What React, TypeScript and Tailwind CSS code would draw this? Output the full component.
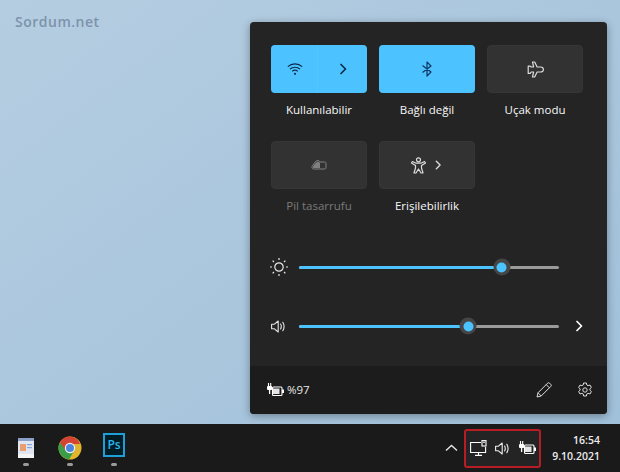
import React from "react";

const font = { fontFamily: '"Segoe UI", "Open Sans", "Noto Sans", sans-serif' };

function Chevron({ c = "#fff", s = 12, w = 1.7 }: { c?: string; s?: number; w?: number }) {
  return (
    <svg width={s} height={s} viewBox="0 0 12 12" fill="none" stroke={c} strokeWidth={w}>
      <path d="M4 1.5 8.5 6 4 10.5" strokeLinecap="round" strokeLinejoin="round" />
    </svg>
  );
}
function Wifi() {
  return (
    <svg width="16" height="14" viewBox="0 0 16 14" fill="none" stroke="#0d2c4d" strokeWidth="1.1">
      <path d="M.8 4.6C4.8 1 11.2 1 15.2 4.6" />
      <path d="M3 7C5.8 4.6 10.2 4.6 13 7" />
      <path d="M5.2 9.4C6.8 8 9.2 8 10.8 9.4" />
      <circle cx="8" cy="11.8" r="1.1" fill="#0d2c4d" stroke="none" />
    </svg>
  );
}
function Bluetooth() {
  return (
    <svg width="12" height="16" viewBox="0 0 12 16" fill="none" stroke="#0f3a66" strokeWidth="1.2">
      <path d="M1.5 4.5 10 11 6 15V1l4 4-8.5 6.5" strokeLinejoin="round" />
    </svg>
  );
}
function Plane() {
  return (
    <svg width="17" height="17" viewBox="0 0 17 17" fill="none" stroke="#dcdcdc" strokeWidth="1.2">
      <path d="M5.5 1h2.2l2.4 5h3.4c1.6 0 2.9 1.1 2.9 2.5S15.100 11 13.500 11h-3.400l-2.400 5H5.500l1.100-5H4.200L3.200 12.400H1.200V5.200h2L4.200 6h2.400z" strokeLinejoin="round" />
    </svg>
  );
}
function Saver() {
  return (
    <svg width="16" height="12" viewBox="0 0 16 12" fill="none">
      <path d="M1 7.500 4.500 2.500 7 1.200 9 3h4.500a1.500 1.500 0 0 1 1.500 1.500v4a1.500 1.500 0 0 1-1.500 1.500H2.500A1.500 1.500 0 0 1 1 8.500z" stroke="#808080" strokeWidth="1" />
      <path d="M2 9V7.500L5 3.500 7 2.500 9 4v5z" fill="#808080" />
    </svg>
  );
}
function Person() {
  return (
    <svg width="15" height="17" viewBox="0 0 15 17" fill="none" stroke="#dcdcdc" strokeWidth="1.2">
      <circle cx="7.500" cy="2.800" r="2" />
      <path d="M1.500 4.500 5 6.200h5l3.500-1.700 1 1.400L10.500 8.500v2.500l1.500 5h-2L7.500 12 5 16H3l1.500-5V8.500L.500 5.900z" strokeLinejoin="round" />
    </svg>
  );
}
function Sun() {
  return (
    <svg width="20" height="20" viewBox="0 0 20 20" fill="none" stroke="#e6e6e6" strokeWidth="1.2">
      <circle cx="10" cy="10" r="4.200" />
      <path d="M10 1v2M10 17v2M1 10h2M17 10h2M3.600 3.600 5 5M15 15l1.400 1.400M3.600 16.400 5 15M15 5l1.400-1.400" />
    </svg>
  );
}
function Speaker({ c = "#e6e6e6" }: { c?: string }) {
  return (
    <svg width="15" height="13" viewBox="0 0 15 13" fill="none" stroke={c} strokeWidth="1.1">
      <path d="M.6 4.200h2.800L7.200 1v11L3.400 8.800H.6z" strokeLinejoin="round" />
      <path d="M9.600 4c.8 1.500.8 3.500 0 5M11.800 2.300c1.600 2.600 1.600 5.800 0 8.400" strokeLinecap="round" />
    </svg>
  );
}
function Battery() {
  return (
    <svg width="17" height="14" viewBox="0 0 17 14" fill="none">
      <path d="M1.500 0v3M3.700 0v3" stroke="#fff" strokeWidth="1.100" />
      <path d="M2.600 7v4" stroke="#fff" strokeWidth="1.300" />
      <rect x="0" y="3" width="5.200" height="4" rx="1" fill="#fff" />
      <rect x="5.500" y="4" width="9.500" height="8.500" rx="1" stroke="#fff" strokeWidth="1.100" />
      <rect x="6" y="5.500" width="6.500" height="5.500" fill="#e4e4e4" />
      <rect x="15" y="6.500" width="2" height="3.500" fill="#fff" />
    </svg>
  );
}
function Pencil() {
  return (
    <svg width="16" height="16" viewBox="0 0 16 16" fill="none" stroke="#dcdcdc" strokeWidth="1">
      <path d="M1 15 2 10.800 11.600 1.200a1.400 1.400 0 0 1 2 0l1.200 1.200a1.400 1.400 0 0 1 0 2L5.200 14z" strokeLinejoin="round" />
      <path d="M10.200 2.600 13.400 5.800M2 10.800 5.200 14" />
    </svg>
  );
}
function Gear() {
  return (
    <svg width="16" height="16" viewBox="0 0 16 16" fill="none" stroke="#dcdcdc" strokeWidth="1">
      <circle cx="8" cy="8" r="2.200" />
      <path d="M6.600 1h2.800l.4 2 1.300.7 1.900-.7 1.400 2.500-1.500 1.300v1.400l1.500 1.300-1.400 2.500-1.900-.7-1.300.7-.4 2H6.600l-.4-2-1.300-.7-1.900.7L1.600 9.500 3.100 8.200V6.800L1.600 5.500 3 3l1.900.7L6.200 3z" strokeLinejoin="round" />
    </svg>
  );
}
function Monitor() {
  return (
    <svg width="17" height="16" viewBox="0 0 17 16" fill="none" stroke="#fff" strokeWidth="1.100">
      <path d="M11 2.500H.6v10h15V7" />
      <path d="M5 15.400h7M8.500 12.500v3" />
      <rect x="12" y="0.600" width="4" height="5.400" />
      <path d="M13 2.200h2" />
    </svg>
  );
}
function Notepad() {
  return (
    <svg width="18" height="22" viewBox="0 0 18 22">
      <rect x="1" y="1" width="16" height="17" fill="#dfe6f2" />
      <rect x="1" y="1" width="16" height="3" fill="#8aa0c8" />
      <rect x="1" y="17" width="16" height="4" fill="#f4f4f4" />
      <rect x="3" y="7" width="6" height="7" fill="#e8a070" />
      <rect x="10" y="7" width="5" height="1.200" fill="#8aa6d8" />
      <rect x="10" y="10" width="5" height="1.200" fill="#8aa6d8" />
    </svg>
  );
}
function Chrome() {
  return (
    <svg width="24" height="24" viewBox="0 0 24 24">
      <circle cx="12" cy="12" r="11.500" fill="#e0b52f" />
      <path d="M12 .5A11.500 11.500 0 0 0 2 6.300L7 15l5-7h10a11.500 11.500 0 0 0-10-7.500z" fill="#d44333" />
      <path d="M2 6.300A11.500 11.500 0 0 0 11 23.500L16 15H8z" fill="#3c9d48" />
      <circle cx="12" cy="12" r="5.200" fill="#f2f2f2" />
      <circle cx="12" cy="12" r="4" fill="#4a86e0" />
    </svg>
  );
}

function Tile({ on, children }: { on?: boolean; children: React.ReactNode }) {
  return (
    <div
      className={
        on
          ? "flex h-12 w-24 items-center justify-center rounded-[4px] bg-[#4cc2ff]"
          : "flex h-12 w-24 items-center justify-center rounded-[4px] border border-[#363636] bg-[#323232]"
      }
    >
      {children}
    </div>
  );
}

function Cell({ label, dim, children }: { label: string; dim?: boolean; children: React.ReactNode }) {
  return (
    <div className="flex w-24 flex-col items-center">
      {children}
      <div
        className={
          dim
            ? "mt-2 h-[18px] text-[11.5px] leading-[18px] whitespace-nowrap text-[#7a7a7a]"
            : "mt-2 h-[18px] text-[11.5px] leading-[18px] font-medium whitespace-nowrap text-[#f8f8f8]"
        }
      >
        {label}
      </div>
    </div>
  );
}

function Slider({ pct }: { pct: number }) {
  return (
    <div className="relative h-[3px] w-[260px] rounded-full bg-[#9a9a9a]">
      <div className="h-full rounded-full bg-[#4cc2ff]" style={{ width: `${pct}%` }} />
      <div
        className="absolute top-1/2 flex h-[17px] w-[17px] -translate-x-1/2 -translate-y-1/2 items-center justify-center rounded-full bg-[#454545]"
        style={{ left: `${pct}%` }}
      >
        <div className="h-[10px] w-[10px] rounded-full bg-[#4cc2ff]" />
      </div>
    </div>
  );
}

function Pill() {
  return <div className="mt-[2px] h-[3px] w-[6px] rounded-full bg-[#9a9a9a]" />;
}

export default function App() {
  return (
    <div
      className="flex h-[472px] w-[620px] flex-col overflow-hidden bg-gradient-to-br from-[#b5cde1] to-[#9fc0da]"
      style={font}
    >
      <div className="flex h-[424px] items-start justify-between pt-[22px] pr-[13px]">
        <div
          className="mt-[-10px] pl-[15px] text-[14px] leading-5 font-semibold tracking-[0.5px] text-[#7d93ab]"
          style={{ fontFamily: '"Open Sans", sans-serif' }}
        >
          Sordum.net
        </div>
        <div className="flex h-[392px] w-[357px] flex-col overflow-hidden rounded-[4px] bg-[#242424] shadow-[0_2px_8px_rgba(0,0,0,0.35)]">
          <div className="flex-1 pt-[23px] pl-[21px]">
            <div className="flex gap-3">
              <Cell label="Kullanılabilir">
                <Tile on>
                  <div className="flex h-full w-full items-center">
                    <div className="flex h-full w-[47px] items-center justify-center border-r border-[#56c6ff] pl-[1px]">
                      <Wifi />
                    </div>
                    <div className="flex flex-1 items-center justify-center">
                      <Chevron c="#0d2c4d" />
                    </div>
                  </div>
                </Tile>
              </Cell>
              <Cell label="Bağlı değil">
                <Tile on>
                  <Bluetooth />
                </Tile>
              </Cell>
              <Cell label="Uçak modu">
                <Tile>
                  <Plane />
                </Tile>
              </Cell>
            </div>
            <div className="mt-[22px] flex gap-3">
              <Cell label="Pil tasarrufu" dim>
                <Tile>
                  <Saver />
                </Tile>
              </Cell>
              <Cell label="Erişilebilirlik">
                <Tile>
                  <div className="flex items-center gap-[7px]">
                    <Person />
                    <Chevron c="#d8d8d8" s={10} />
                  </div>
                </Tile>
              </Cell>
            </div>
            <div className="mt-[42px] flex h-5 items-center">
              <div className="ml-[-2px] flex w-[30px] justify-start">
                <Sun />
              </div>
              <Slider pct={78} />
            </div>
            <div className="mt-[39px] flex h-5 items-center">
              <div className="flex w-[28px] justify-start">
                <Speaker />
              </div>
              <Slider pct={65} />
              <div className="ml-[14px]">
                <Chevron />
              </div>
            </div>
          </div>
          <div className="flex h-12 items-center justify-between bg-[#1c1c1c] pr-[14px] pl-[17px]">
            <div className="flex items-center gap-[3px]">
              <Battery />
              <span className="text-[11.5px] font-medium text-[#e8e8e8]">%97</span>
            </div>
            <div className="flex items-center gap-[25px]">
              <Pencil />
              <Gear />
            </div>
          </div>
        </div>
      </div>
      <div className="flex h-12 items-center justify-between bg-[#1a1a1a]">
        <div className="flex items-center pt-1 pl-[15px]">
          <div className="flex w-[22px] flex-col items-center">
            <div className="flex h-[26px] items-center">
              <Notepad />
            </div>
            <Pill />
          </div>
          <div className="ml-[21px] flex w-6 flex-col items-center">
            <div className="flex h-[26px] items-center">
              <Chrome />
            </div>
            <Pill />
          </div>
          <div className="ml-[20px] flex w-6 flex-col items-center">
            <div className="flex h-[26px] items-start">
              <div className="mt-[-2px] flex h-6 w-[22px] items-center justify-center border-2 border-[#1f9fd8] bg-[#001d26] text-[12px] leading-none font-semibold text-[#2fb4ec]">
                Ps
              </div>
            </div>
            <Pill />
          </div>
        </div>
        <div className="flex items-center pr-5">
          <svg width="13" height="8" viewBox="0 0 13 8" fill="none" stroke="#e6e6e6" strokeWidth="1.4">
            <path d="M1 6.500 6.500 1.500 12 6.500" />
          </svg>
          <div className="ml-[6px] flex h-[39px] w-[77px] items-center justify-center rounded-[3px] border-2 border-[#b81c24] bg-[#242424]">
            <Monitor />
            <div className="mr-[9px] ml-2">
              <Speaker c="#f0f0f0" />
            </div>
            <Battery />
          </div>
          <div className="ml-3 flex w-[47px] flex-col items-end text-[10.5px] leading-4 font-semibold text-[#ececec]">
            <span>16:54</span>
            <span>9.10.2021</span>
          </div>
        </div>
      </div>
    </div>
  );
}
